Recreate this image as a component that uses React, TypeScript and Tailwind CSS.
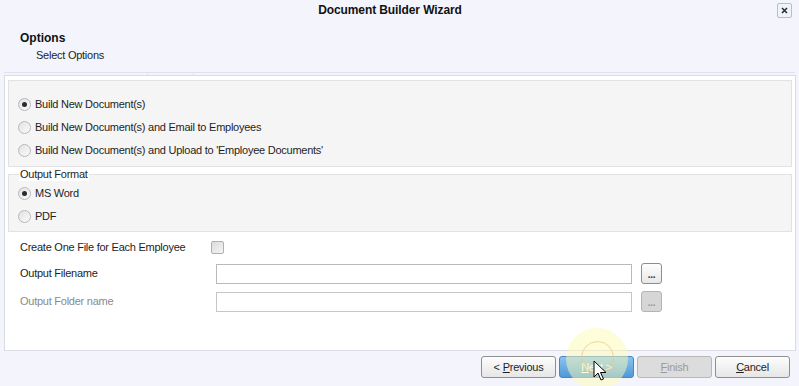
import React from "react";

const font = { fontFamily: '"Liberation Sans", Arial, sans-serif' };

function Radio({ checked, label }: { checked?: boolean; label: string }) {
  return (
    <div className="flex items-center h-[23px]">
      <span className="w-[13px] h-[13px] rounded-full border border-[#b8b8b8] bg-gradient-to-br from-[#e2e2e2] to-[#fbfbfb] flex items-center justify-center">
        {checked && <span className="w-[5px] h-[5px] rounded-full bg-[#2a2a35]" />}
      </span>
      <span className="ml-[4px] text-[11px] tracking-[-0.25px] text-[#1e1e1e]">{label}</span>
    </div>
  );
}

function WizButton({ children, variant }: { children: React.ReactNode; variant?: "blue" | "disabled" }) {
  const cls =
    variant === "blue"
      ? "bg-gradient-to-b from-[#8cc3ee] to-[#4f98d6] border-[#4a86bf] text-white"
      : variant === "disabled"
      ? "bg-[#dcdcdc] border-[#b8b8b8] text-[#9a9a9a]"
      : "bg-gradient-to-b from-[#fdfdfd] to-[#e6e6e6] border-[#8e8e8e] text-[#1e1e1e]";
  return (
    <button className={`w-[75px] h-[22px] rounded-[3px] border text-[11px] tracking-[-0.25px] flex items-center justify-center ${cls}`}>
      {children}
    </button>
  );
}

export default function App() {
  return (
    <div className="w-[799px] h-[386px] bg-[#f4f5fc] relative overflow-hidden" style={font}>
      {/* title */}
      <div className="h-[20px] pr-[19px] flex items-center justify-center text-[12px] font-bold tracking-[-0.1px] text-[#111]">
        Document Builder Wizard
      </div>
      <div className="absolute top-[3px] right-[7px] w-[15px] h-[15px] rounded-[2px] border border-[#a9c3d4] bg-[#eef4f8] flex items-center justify-center">
        <svg width="7" height="7" viewBox="0 0 7 7">
          <path d="M1 1 L6 6 M6 1 L1 6" stroke="#2b2b3a" strokeWidth="1.6" />
        </svg>
      </div>

      {/* header */}
      <div className="pt-[10px] pl-[20px]">
        <div className="text-[12px] font-bold leading-[16px] text-[#111]">Options</div>
        <div className="mt-[2px] pl-[16px] text-[11px] tracking-[-0.25px] leading-[14px] text-[#1e1e1e]">Select Options</div>
      </div>
      <div className="mt-[10px] ml-[4px] w-[791px] h-px bg-[#e0e1ea] relative">
        <span className="absolute left-[143px] top-0 w-px h-[3px] bg-[#e0e1ea]" />
        <span className="absolute left-[189px] top-0 w-px h-[3px] bg-[#e0e1ea]" />
      </div>

      {/* panel */}
      <div className="mt-[2px] ml-[4px] w-[792px] h-[276px] border border-[#d9dbe5] bg-white pt-[4px] px-[3px]">
        <div className="h-[87px] border border-[#e2e2e2] bg-[#f5f5f5] pl-[9px] pt-[12px]">
          <Radio checked label="Build New Document(s)" />
          <Radio label="Build New Document(s) and Email to Employees" />
          <Radio label="Build New Document(s) and Upload to 'Employee Documents'" />
        </div>
        <div className="mt-[7px] h-[58px] border border-[#e2e2e2] bg-[#f5f5f5] pl-[9px] pt-[7px] relative">
          <span className="absolute -top-[8px] left-[10px] bg-white px-px text-[11px] tracking-[-0.25px] leading-[14px] text-[#1e1e1e]">
            Output Format
          </span>
          <Radio checked label="MS Word" />
          <Radio label="PDF" />
        </div>

        <div className="pl-[12px] pt-[7px] text-[11px] tracking-[-0.25px]">
          <div className="flex items-center h-[16px]">
            <span className="w-[191px] text-[#1e1e1e]">Create One File for Each Employee</span>
            <span className="w-[13px] h-[13px] rounded-[2px] border border-[#b0b0b0] bg-gradient-to-br from-[#dcdcdc] to-[#f4f4f4]" />
          </div>
          <div className="flex items-center mt-[8px] h-[21px]">
            <span className="w-[196px] text-[#1e1e1e]">Output Filename</span>
            <div className="w-[416px] h-[20px] border border-[#b9b9b9] bg-white" />
            <button className="ml-[9px] w-[21px] h-[21px] rounded-[3px] border border-[#8d8d8d] bg-gradient-to-b from-[#fefefe] to-[#e8e8e8] flex items-end justify-center pb-[5px]">
              <span className="text-[10px] leading-[6px] font-bold text-[#333]">...</span>
            </button>
          </div>
          <div className="flex items-center mt-[7px] h-[21px]">
            <span className="w-[196px] text-[#8a8a8a]">Output Folder name</span>
            <div className="w-[416px] h-[20px] border border-[#c6c6c6] bg-white" />
            <button className="ml-[9px] w-[21px] h-[21px] rounded-[3px] border border-[#b4b4b4] bg-[#d6d6d6] flex items-end justify-center pb-[5px]">
              <span className="text-[10px] leading-[6px] font-bold text-[#9a9a9a]">...</span>
            </button>
          </div>
        </div>
      </div>

      {/* footer buttons */}
      <div className="mt-[5px] flex justify-end gap-[3px] pr-[9px]">
        <WizButton>
          &lt; <span className="underline ml-[3px]">P</span>revious
        </WizButton>
        <WizButton variant="blue">
          <span className="underline">N</span>ext &gt;
        </WizButton>
        <WizButton variant="disabled">
          <span className="underline">F</span>inish
        </WizButton>
        <WizButton>
          <span className="underline">C</span>ancel
        </WizButton>
      </div>

      {/* click highlight + cursor overlay */}
      <div className="absolute left-[566px] top-[328px] w-[62px] h-[62px] rounded-full bg-[#fdfbb4]/50 pointer-events-none" />
      <div className="absolute left-[581px] top-[341px] w-[33px] h-[33px] rounded-full border border-[#f0c27a]/70 pointer-events-none" />
      <svg className="absolute left-[593px] top-[360px] pointer-events-none" width="14" height="22" viewBox="0 0 14 22">
        <path d="M1 1 L1 17 L5 13 L8 20 L10.5 19 L7.5 12.5 L13 12.5 Z" fill="white" stroke="black" strokeWidth="1" strokeLinejoin="round" />
      </svg>
    </div>
  );
}
